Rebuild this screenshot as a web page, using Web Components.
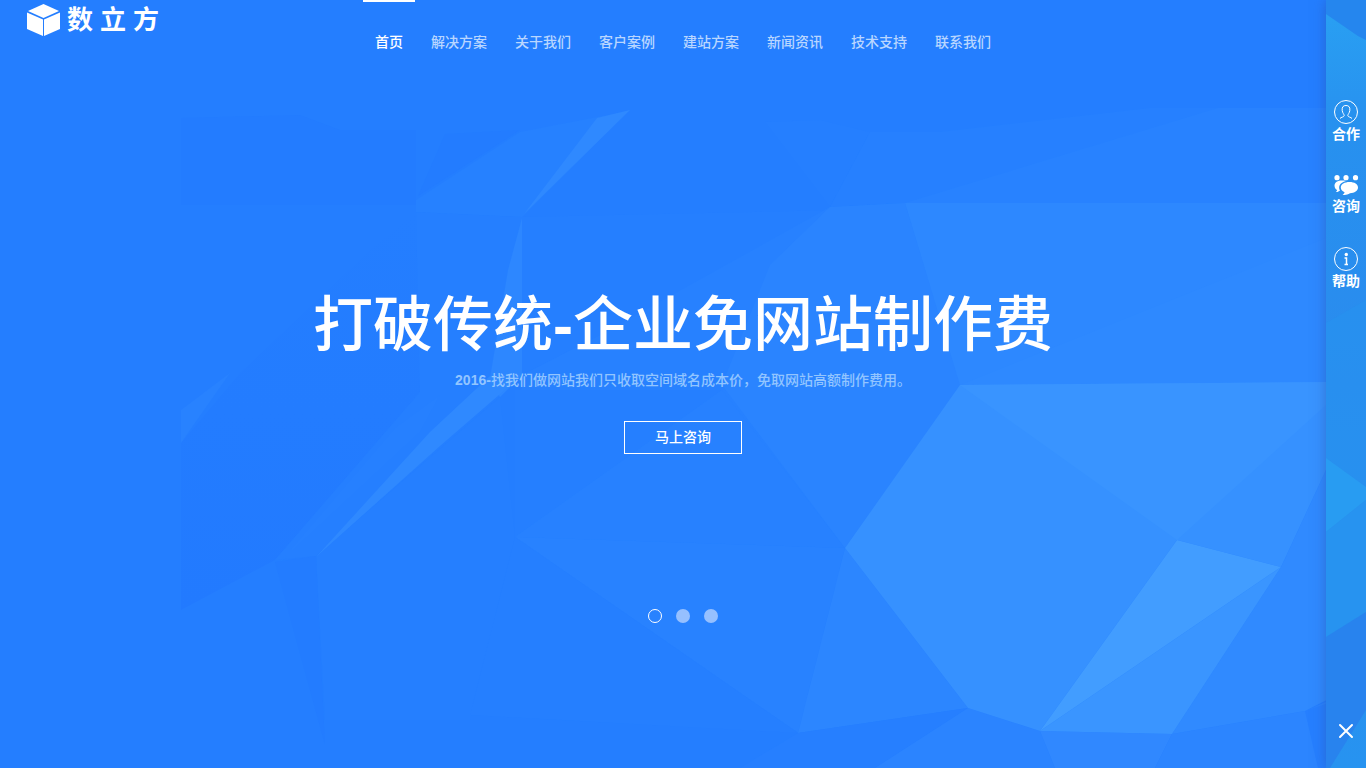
<!DOCTYPE html>
<html lang="zh-CN">
<head>
<meta charset="utf-8">
<meta name="viewport" content="width=device-width, initial-scale=1">
<title>数立方</title>
<style>
  body { margin: 0; background: #247eff; color: #fff; font: 14px/20px "Liberation Sans", "Noto Sans CJK SC", sans-serif; }
</style>
</head>
<body>
<cube-page>
  <cube-logo slot="logo"></cube-logo>
  <cube-nav slot="nav"></cube-nav>
  <cube-hero>
    <span slot="title">打破传统<b>-</b>企业免网站制作费</span>
    <span slot="lead"><b>2016-</b>找我们做网站我们只收取空间域名成本价，免取网站高额制作费用。</span>
    <span slot="action">马上咨询</span>
  </cube-hero>
  <cube-pager slot="pager"></cube-pager>
  <cube-sidebar slot="side"></cube-sidebar>
</cube-page>

<script>
const define = (name, html) => {
  const template = document.createElement('template');
  template.innerHTML = html;
  customElements.define(name, class extends HTMLElement {
    constructor() {
      super();
      this.attachShadow({ mode: 'open' }).append(template.content.cloneNode(true));
    }
  });
};

define('cube-backdrop', `
<style>
  :host { display: block; overflow: hidden; }
  svg { display: block; width: 100%; height: 100%; }
</style>
<svg viewBox="0 0 1366 768" preserveAspectRatio="xMidYMid slice" aria-hidden="true">
  <defs>
    <linearGradient id="shade" x1="0" y1="0" x2="0" y2="1">
      <stop offset="0" stop-color="#247eff"/><stop offset=".5" stop-color="#237cff"/><stop offset="1" stop-color="#227aff"/>
    </linearGradient>
  </defs>
  <rect width="1366" height="768" fill="#247eff"/>
  <path fill="#237cff" d="M181 118L300 115L340 130H416V205H181Z"/>
  <path fill="#237cff" d="M445 134L520 130L418 196Z"/>
  <path fill="url(#shade)" d="M416 212L370 250L240 373L181 443V610L275 560L420 392L416 212Z"/>
  <path fill="#257fff" d="M416 212L522 217V375L500 397L316 556L275 560L420 392Z"/>
  <path fill="#257fff" d="M522 217L840 210L600 335L522 375Z"/>
  <path fill="#257fff" d="M316 556L500 397L515 537L470 720L325 720Z"/>
  <path fill="#237cff" d="M275 562L316 556L325 745Z"/>
  <path fill="#2681ff" d="M416 200L520 132L597 117L628 111L522 217L416 212Z"/>
  <path fill="#2f89ff" d="M597 118L630 110L524 214Z"/>
  <path fill="#2d87ff" d="M522 218V375L500 397L490 378L508 270Z"/>
  <path fill="#2f89ff" d="M490 376L522 375L440 446L316 557L430 432Z"/>
  <path fill="#2680ff" d="M395 428L440 395L420 432L280 562Z"/>
  <path fill="#2882ff" d="M181 410L230 373L190 430L181 443Z"/>
  <path fill="#257fff" d="M765 122L820 120L870 132L830 207Z"/>
  <path fill="#2680ff" d="M870 132H940L1150 108H1326V203H905L830 207Z"/>
  <path fill="#2882ff" d="M905 203L1218 108H1326V204Z"/>
  <path fill="#2781ff" d="M830 207L600 335L522 375L515 537L845 548L960 385L905 203Z"/>
  <path fill="#257fff" d="M515 390L722 390L515 537Z"/>
  <path fill="#2781ff" d="M722 390L515 537L845 548Z"/>
  <path fill="#2a84ff" d="M905 203L830 207L770 265L722 385L845 548L961 385Z"/>
  <path fill="#2d88ff" d="M905 203H1366V385H960Z"/>
  <path fill="#2e89ff" d="M1366 222L960 385H1366Z"/>
  <path fill="#2882ff" d="M515 537L845 548L798 733Z"/>
  <path fill="#257fff" d="M515 537L798 733L470 715Z"/>
  <path fill="#2c86ff" d="M845 548L968 708L798 733Z"/>
  <path fill="#267fff" d="M798 733L968 708L875 768H740Z"/>
  <path fill="#2b84ff" d="M968 708L1040 731L1055 768H875Z"/>
  <path fill="#3088ff" d="M1040 731L1172 734L1155 768H1055Z"/>
  <path fill="#2c85ff" d="M1172 734L1305 711L1326 702V768H1155Z"/>
  <path fill="#267fff" d="M1305 711L1366 690V768H1318Z"/>
  <path fill="#308aff" d="M1326 470L1281 567L1172 734L1305 711L1366 680V400Z"/>
  <path fill="#3691ff" d="M960 385L1326 382V470L1281 567L1177 540L1040 731L968 708L845 548Z"/>
  <path fill="#3994ff" d="M960 385L1326 382V405L1177 540Z"/>
  <path fill="#3a95ff" d="M1281 567L1172 734L1040 731Z"/>
  <path fill="#429dff" d="M1177 540L1281 567L1040 731Z"/>
</svg>`);

define('cube-page', `
<style>
  :host { display: block; position: relative; min-height: 100vh; }
  cube-backdrop { position: absolute; inset: 0; }
  .page { position: relative; display: grid; grid-template-rows: 84px 1fr 159px; min-height: 100vh; }
  header { display: grid; grid-template-columns: 1fr auto 1fr; align-items: start; }
  main { display: grid; place-content: center; padding-top: 50px; }
  aside { position: fixed; top: 0; right: 0; bottom: 0; width: 40px; }
</style>
<cube-backdrop></cube-backdrop>
<div class="page">
  <header><slot name="logo"></slot><slot name="nav"></slot></header>
  <main><slot></slot></main>
  <footer><slot name="pager"></slot></footer>
</div>
<aside><slot name="side"></slot></aside>`);

define('cube-logo', `
<style>
  :host { display: block; padding: 4px 0 0 27px; }
  a { display: inline-flex; align-items: center; gap: 7px; height: 32px; color: #fff; text-decoration: none; font-size: 26px; font-weight: 700; line-height: 32px; }
  svg { width: 33px; height: 32px; }
</style>
<a href="#home">
  <svg viewBox="0 0 33 32" fill="#fff" aria-hidden="true">
    <path d="M16.500 0L32 7L16.500 14L1 7Z"/>
    <path d="M0 8.500L16 15.500V32L0 25Z"/>
    <path d="M33 8.500L17 15.500V32L33 25Z"/>
  </svg>
  <span>数</span><span>立</span><span>方</span>
</a>`);

define('cube-nav', `
<style>
  :host { display: block; }
  nav { display: flex; gap: 4px; }
  a { padding: 30px 12px; border-top: 2px solid transparent; color: #b9d6ff; text-decoration: none; font-weight: 500; white-space: nowrap; }
  a[aria-current] { color: #fff; border-color: #fff; }
</style>
<nav aria-label="主导航">
  <a href="#home" aria-current="page">首页</a>
  <a href="#solutions">解决方案</a>
  <a href="#about">关于我们</a>
  <a href="#cases">客户案例</a>
  <a href="#plans">建站方案</a>
  <a href="#news">新闻资讯</a>
  <a href="#support">技术支持</a>
  <a href="#contact">联系我们</a>
</nav>`);

define('cube-hero', `
<style>
  :host { display: flex; flex-direction: column; align-items: center; text-align: center; }
  h1 { margin: 0 0 8px; font-size: 60px; line-height: 72px; font-weight: 500; }
  p { margin: 0 0 31px; color: #92c5ff; font-weight: 500; }
  button { padding: 0 30px; height: 33px; border: 1px solid #fff; background: none; color: #fff; font: inherit; font-weight: 500; cursor: pointer; }
</style>
<h1><slot name="title"></slot></h1>
<p><slot name="lead"></slot></p>
<button type="button"><slot name="action"></slot></button>`);

define('cube-pager', `
<style>
  :host { display: flex; justify-content: center; gap: 14px; }
  button { box-sizing: border-box; width: 14px; height: 14px; padding: 0; border: 0; border-radius: 50%; background: #96c0ff; cursor: pointer; }
  button[aria-current] { border: 1px solid #fff; background: none; }
</style>
<button type="button" aria-label="1" aria-current="true"></button>
<button type="button" aria-label="2"></button>
<button type="button" aria-label="3"></button>`);

define('cube-sidebar', `
<style>
  :host { display: grid; height: 100%; box-shadow: 0 0 12px rgba(40, 80, 160, .5); }
  .art, .bar { grid-area: 1 / 1; min-height: 0; }
  .art { width: 40px; height: 100vh; }
  .bar { position: relative; display: flex; flex-direction: column; justify-content: space-between; align-items: center; padding: 100px 0 29px; }
  nav { display: flex; flex-direction: column; gap: 31px; }
  a { display: flex; flex-direction: column; align-items: center; color: #fff; text-decoration: none; font-weight: 700; white-space: nowrap; }
  a svg { display: block; width: 26px; }
  button { display: block; padding: 0; border: 0; background: none; height: 16px; cursor: pointer; }
  button svg { display: block; }
</style>
<svg class="art" viewBox="0 0 40 768" preserveAspectRatio="none" aria-hidden="true">
  <defs>
    <linearGradient id="g" x1="0" y1="0" x2="0" y2="1">
      <stop offset="0" stop-color="#289def"/><stop offset=".15" stop-color="#2791ef"/>
      <stop offset=".5" stop-color="#2a8bee"/><stop offset="1" stop-color="#2793f0"/>
    </linearGradient>
    <linearGradient id="glow" x1="0" y1="0" x2="0" y2="1">
      <stop offset="0" stop-color="#299ff2"/><stop offset="1" stop-color="#2894f0"/>
    </linearGradient>
  </defs>
  <rect width="40" height="768" fill="url(#g)"/>
  <path fill="url(#glow)" d="M0 14L32 36L40 40V100H0Z"/>
  <path fill="#2586ee" d="M0 0H40V40L32 36L0 14Z"/>
  <path fill="#2594ef" d="M0 323L40 300V487L0 458Z" opacity=".5"/>
  <path fill="#289cf2" d="M0 458L40 487V500L0 532Z"/>
  <path fill="#2793f0" d="M0 532L40 500V612L0 637Z"/>
  <path fill="#2883ee" d="M0 637L40 612V710L4 768H0Z"/>
</svg>
<div class="bar">
  <nav aria-label="快捷入口">
    <a href="#cooperate">
      <svg viewBox="0 0 26 24" height="24" fill="none" stroke="#fff" aria-hidden="true">
        <circle cx="13" cy="12" r="11.5"/>
        <path d="M7 18.500C8 17 11 17.300 11.200 15.500C11.200 14.500 9.500 13 9.200 10.500C8.800 7 10.200 5.500 13 5.500S17.200 7 16.800 10.500C16.500 13 14.800 14.500 14.800 15.500C15 17.300 18 17 19 18.500"/>
      </svg>
      <span>合作</span>
    </a>
    <a href="#consult">
      <svg viewBox="0 0 26 21" height="21" fill="#fff" aria-hidden="true">
        <circle cx="4" cy="2.700" r="2.600"/><circle cx="13" cy="2.700" r="2.600"/><circle cx="22.500" cy="2.700" r="2.600"/>
        <path d="M13 6C7 4.500 1.500 6.500 1.500 10.500C1.500 12.500 2.500 14 4 15C4 16 3.500 16.500 2.800 17C4.500 17.200 6 16.500 7 15.500C5 12 6.500 7.500 13 6Z"/>
        <path d="M16.500 7C21.500 7 25 9.200 25 12.500S21.500 18 17 18.200C14.500 19.900 12 20.200 9.500 19.700C10.800 19 11.500 18.200 11.500 17.200C9.200 16.300 7.800 14.500 7.800 12.500C7.800 9.200 11.500 7 16.500 7Z"/>
      </svg>
      <span>咨询</span>
    </a>
    <a href="#help">
      <svg viewBox="0 0 26 24" height="24" fill="none" stroke="#fff" aria-hidden="true">
        <circle cx="13" cy="12" r="11.5"/>
        <circle cx="13.300" cy="7.500" r="1.700" fill="#fff" stroke="none"/>
        <path stroke-width="1.500" d="M11.500 11H13.500V17.500M11.500 17.500H15"/>
      </svg>
      <span>帮助</span>
    </a>
  </nav>
  <button type="button" aria-label="关闭">
    <svg width="16" height="16" viewBox="0 0 16 16" stroke="#fff" stroke-width="2" stroke-linecap="round" aria-hidden="true">
      <path d="M2 2L14 14M14 2L2 14"/>
    </svg>
  </button>
</div>`);
</script>
</body>
</html>
